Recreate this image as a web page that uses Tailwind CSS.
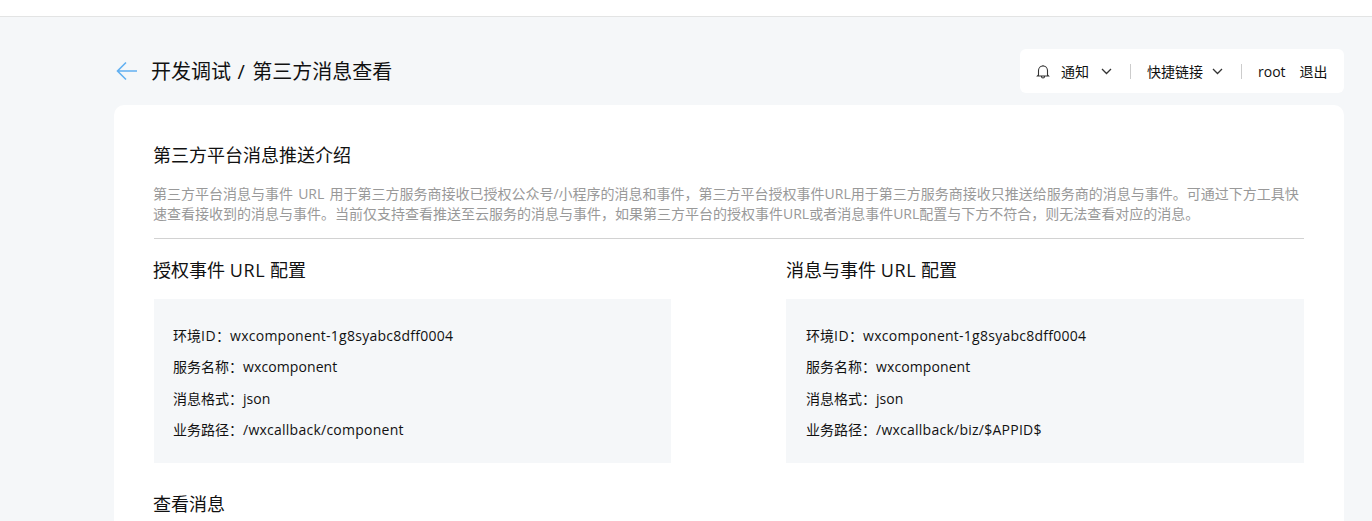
<!DOCTYPE html>
<html lang="zh">
<head>
<meta charset="utf-8">
<script src="https://cdn.jsdelivr.net/npm/@tailwindcss/browser@4"></script>
</head>
<body class="h-[521px] overflow-hidden bg-[#f5f7f9] font-['Open_Sans','Noto_Sans_CJK_SC',sans-serif] text-[#111]">
<header class="h-[17px] bg-white border-b border-[#e3e4e4]"></header>
<main class="pl-[114px] pr-[28px]">
  <div class="flex items-center justify-between h-[88px] pt-[20px]">
    <div class="flex items-center">
      <svg class="w-[22px] h-[20px] ml-[2px]" viewBox="0 0 22 20" fill="none" stroke="#62b0f1" stroke-width="1.6"><path d="M1 10h20M10 1.5 1.5 10l8.5 8.500"/></svg>
      <h1 class="ml-[13px] mt-[2px] text-[20px] leading-[28px] font-normal">开发调试<span class="tracking-[1.2px]"> / </span>第三方消息查看</h1>
    </div>
    <nav class="flex items-center h-[44px] w-[324px] pl-[16px] bg-white rounded-md text-[14px]">
      <svg class="w-[14px] h-[15px]" viewBox="0 0 14 15" fill="none" stroke="#333" stroke-width="1.100"><path d="M2.500 11V6.500a4.500 4.500 0 0 1 9 0V11l1 1H1.500zM5.500 12.500a1.500 1.500 0 0 0 3 0M7 1v1"/></svg>
      <span class="ml-[11px]">通知</span>
      <svg class="ml-[12px] w-[11px] h-[7px]" viewBox="0 0 11 7" fill="none" stroke="#333" stroke-width="1.300"><path d="m1 1 4.500 4.500L10 1"/></svg>
      <span class="ml-[18px] w-px h-[15px] bg-[#ccc]"></span>
      <span class="ml-[16px]">快捷链接</span>
      <svg class="ml-[9px] w-[11px] h-[7px]" viewBox="0 0 11 7" fill="none" stroke="#333" stroke-width="1.300"><path d="m1 1 4.500 4.500L10 1"/></svg>
      <span class="ml-[18px] w-px h-[15px] bg-[#ccc]"></span>
      <span class="ml-[16px]">root</span>
      <span class="ml-[14px]">退出</span>
    </nav>
  </div>
  <section class="h-[416px] bg-white rounded-t-[10px] px-[40px] pt-[37px]">
    <h2 class="-ml-px text-[18px] leading-[26px] font-normal">第三方平台消息推送介绍</h2>
    <div class="mt-[16px] pb-[14px] border-b border-[#d2d2d2]">
      <p class="-ml-px text-[14px] leading-[20px] text-[#999] [word-spacing:1.5px]">第三方平台消息与事件 URL 用于第三方服务商接收已授权公众号/小程序的消息和事件，第三方平台授权事件URL用于第三方服务商接收只推送给服务商的消息与事件。可通过下方工具快速查看接收到的消息与事件。当前仅支持查看推送至云服务的消息与事件，如果第三方平台的授权事件URL或者消息事件URL配置与下方不符合，则无法查看对应的消息。</p>
    </div>
    <div class="grid grid-cols-[517px_518px] gap-x-[115px] mt-[18px]">
      <div>
        <h3 class="-ml-px text-[18px] leading-[26px] font-normal">授权事件 <span class="tracking-[0.7px]">URL</span> 配置</h3>
        <div class="mt-[16px] h-[164px] bg-[#f5f7f9] pl-[19px] pr-[20px] pt-[21px] text-[14px] leading-[31.300px]">
          <p>环境<span class="tracking-[0.5px]">ID</span>：<span class="tracking-[0.25px]">wxcomponent-1g8syabc8dff0004</span></p>
          <p>服务名称：<span class="tracking-[0.1px]">wxcomponent</span></p>
          <p>消息格式：json</p>
          <p>业务路径：<span class="tracking-[0.25px]">/wxcallback/component</span></p>
        </div>
      </div>
      <div>
        <h3 class="text-[18px] leading-[26px] font-normal">消息与事件 <span class="tracking-[0.7px]">URL</span> 配置</h3>
        <div class="mt-[16px] h-[164px] bg-[#f5f7f9] pl-[20px] pr-[20px] pt-[21px] text-[14px] leading-[31.300px]">
          <p>环境<span class="tracking-[0.5px]">ID</span>：<span class="tracking-[0.25px]">wxcomponent-1g8syabc8dff0004</span></p>
          <p>服务名称：<span class="tracking-[0.1px]">wxcomponent</span></p>
          <p>消息格式：json</p>
          <p>业务路径：<span class="tracking-[0.25px]">/wxcallback/biz/$APPID$</span></p>
        </div>
      </div>
    </div>
    <h2 class="-ml-px mt-[28px] text-[18px] leading-[26px] font-normal">查看消息</h2>
  </section>
</main>
</body>
</html>
